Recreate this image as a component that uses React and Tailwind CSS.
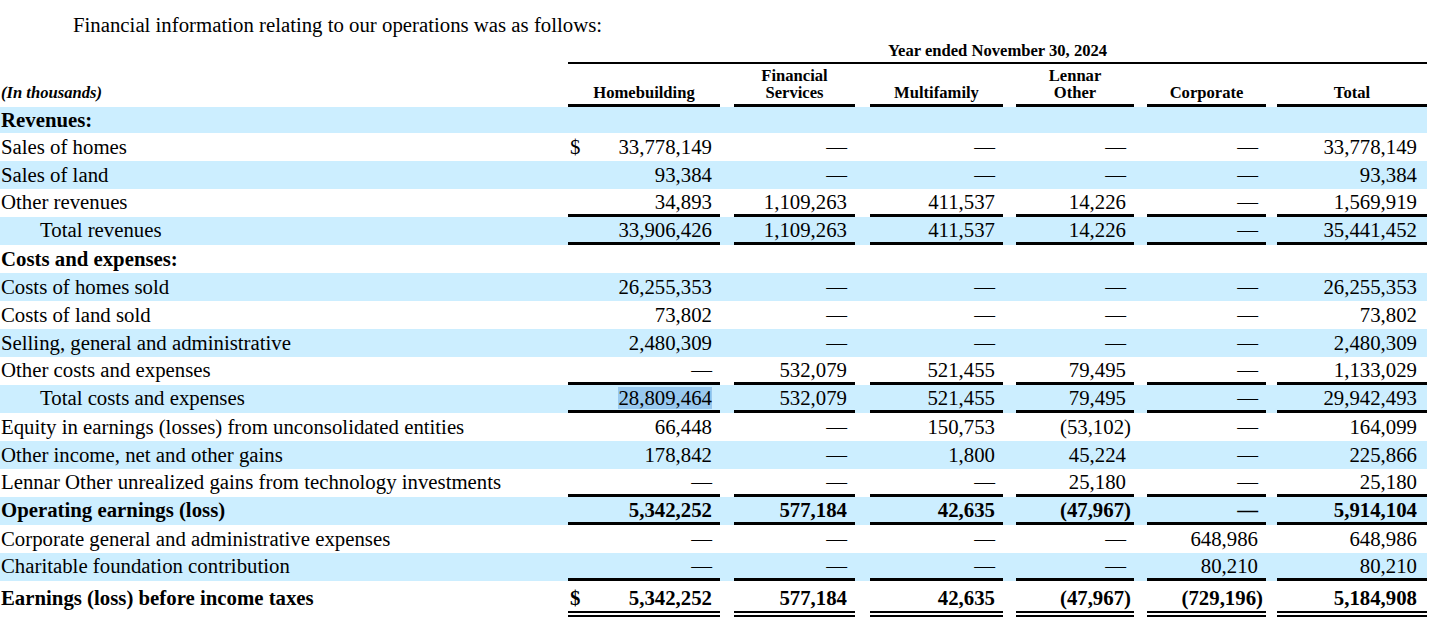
import React from "react";

const GRID =
  "grid grid-cols-[568px_152px_14px_121px_15px_133px_13px_118px_13px_119px_11px_150px]";

const D = "—";

const rows = [
  { label: "Revenues:", bold: true, head: true, h: "h-[26px]" },
  { label: "Sales of homes", dollar: true, vals: ["33,778,149", D, D, D, D, "33,778,149"] },
  { label: "Sales of land", vals: ["93,384", D, D, D, D, "93,384"] },
  { label: "Other revenues", bb: true, vals: ["34,893", "1,109,263", "411,537", "14,226", D, "1,569,919"] },
  { label: "Total revenues", indent: true, bb: true, vals: ["33,906,426", "1,109,263", "411,537", "14,226", D, "35,441,452"] },
  { label: "Costs and expenses:", bold: true, head: true },
  { label: "Costs of homes sold", vals: ["26,255,353", D, D, D, D, "26,255,353"] },
  { label: "Costs of land sold", vals: ["73,802", D, D, D, D, "73,802"] },
  { label: "Selling, general and administrative", vals: ["2,480,309", D, D, D, D, "2,480,309"] },
  { label: "Other costs and expenses", bb: true, vals: [D, "532,079", "521,455", "79,495", D, "1,133,029"] },
  { label: "Total costs and expenses", indent: true, bb: true, hl: 0, vals: ["28,809,464", "532,079", "521,455", "79,495", D, "29,942,493"] },
  { label: "Equity in earnings (losses) from unconsolidated entities", vals: ["66,448", D, "150,753", "(53,102)", D, "164,099"] },
  { label: "Other income, net and other gains", vals: ["178,842", D, "1,800", "45,224", D, "225,866"] },
  { label: "Lennar Other unrealized gains from technology investments", bb: true, vals: [D, D, D, "25,180", D, "25,180"] },
  { label: "Operating earnings (loss)", bold: true, bb: true, vals: ["5,342,252", "577,184", "42,635", "(47,967)", D, "5,914,104"] },
  { label: "Corporate general and administrative expenses", vals: [D, D, D, D, "648,986", "648,986"] },
  { label: "Charitable foundation contribution", bb: true, vals: [D, D, D, D, "80,210", "80,210"] },
  { label: "Earnings (loss) before income taxes", bold: true, dollar: true, dbl: true, h: "h-[36px]", vals: ["5,342,252", "577,184", "42,635", "(47,967)", "(729,196)", "5,184,908"] },
];

function ValueCell({ v, row, idx }) {
  const paren = v.endsWith(")");
  const border = row.dbl
    ? "border-b-[6px] border-double border-black pt-[3px]"
    : row.bb
    ? "border-b-[3px] border-black"
    : "";
  const pr = paren ? "pr-[3px]" : idx === 5 ? "pr-[10px]" : "pr-[8px]";
  return (
    <div className={`flex items-center justify-between h-full ${border} ${pr}`}>
      <span className="pl-[2px]">{row.dollar && idx === 0 ? "$" : ""}</span>
      {row.hl === idx ? (
        <span className="bg-[#99c9ef] leading-[22px] inline-block">{v}</span>
      ) : (
        <span>{v}</span>
      )}
    </div>
  );
}

function Row({ row, i }) {
  const blue = i % 2 === 0;
  const h = row.h || "h-[28px]";
  const cells = [];
  if (row.vals) {
    row.vals.forEach((v, idx) => {
      cells.push(<ValueCell key={"v" + idx} v={v} row={row} idx={idx} />);
      if (idx < 5) cells.push(<div key={"g" + idx} />);
    });
  } else {
    for (let k = 0; k < 11; k++) cells.push(<div key={k} />);
  }
  return (
    <div
      className={`${GRID} ${h} ${blue ? "bg-[#cceeff]" : "bg-white"} ${
        row.bold ? "font-bold" : ""
      } text-[20.8px] leading-[24px]`}
    >
      <div
        className={`flex items-center h-full ${row.dbl ? "pb-[6px] pt-[3px]" : row.bb ? "pb-[2px]" : ""} ${
          row.indent ? "pl-[40px]" : "pl-[1px]"
        } whitespace-nowrap`}
      >
        {row.label}
      </div>
      {cells}
    </div>
  );
}

function HeadCell({ children }) {
  return (
    <div className="flex items-end justify-center text-center border-b-[3px] border-black pb-[3px] leading-[17px]">
      <div>{children}</div>
    </div>
  );
}

export default function App() {
  return (
    <div className="w-[1456px] h-[630px] bg-white text-black font-['Liberation_Serif','Times_New_Roman',serif] overflow-hidden">
      <div className="w-[1427px]">
        <div className="h-[38px] pt-[13px] pl-[73px] text-[20.8px] leading-[24px]">
          Financial information relating to our operations was as follows:
        </div>
        <div className={`${GRID} h-[26px] text-[16.6px] font-bold leading-[17px]`}>
          <div />
          <div className="col-span-11 flex items-end justify-center border-b-2 border-black pb-[3px]">
            Year ended November 30, 2024
          </div>
        </div>
        <div className={`${GRID} h-[43px] text-[16.6px] font-bold`}>
          <div className="flex items-end pb-[6px] leading-[17px] italic pl-[1px]">(In thousands)</div>
          <HeadCell>Homebuilding</HeadCell>
          <div />
          <HeadCell>
            Financial
            <br />
            Services
          </HeadCell>
          <div />
          <HeadCell>Multifamily</HeadCell>
          <div />
          <HeadCell>
            Lennar
            <br />
            Other
          </HeadCell>
          <div />
          <HeadCell>Corporate</HeadCell>
          <div />
          <HeadCell>Total</HeadCell>
        </div>
        {rows.map((r, i) => (
          <Row key={i} row={r} i={i} />
        ))}
      </div>
    </div>
  );
}
